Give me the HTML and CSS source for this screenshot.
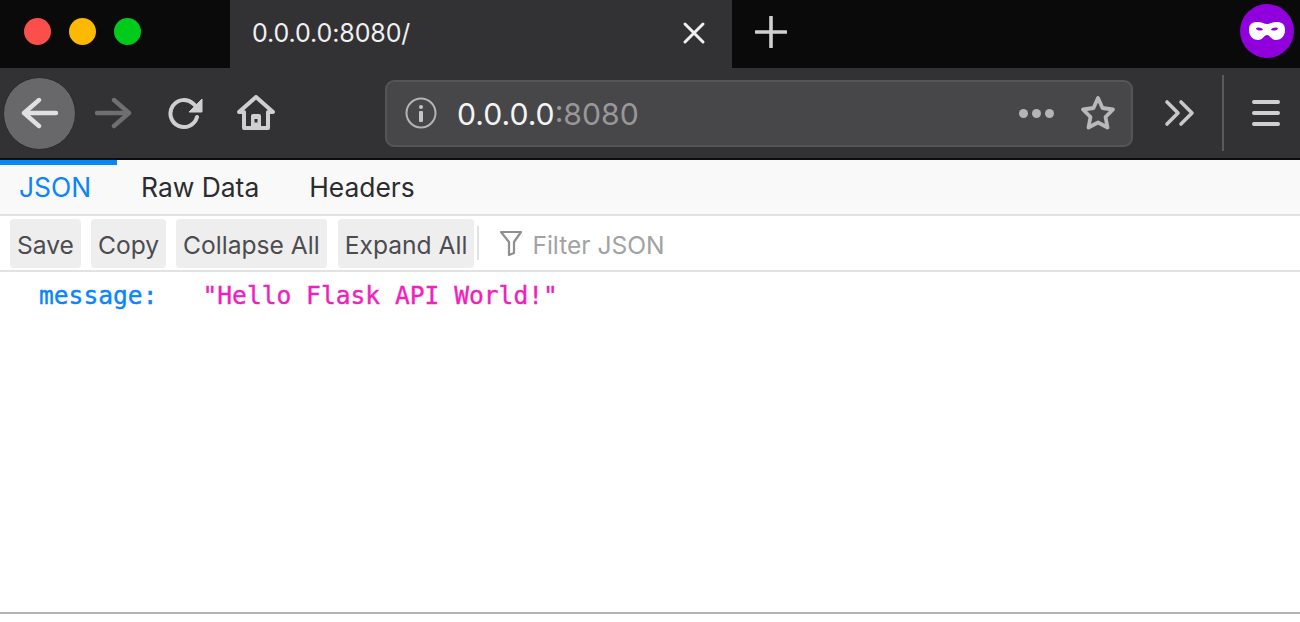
FILE: index.html
```html
<!DOCTYPE html>
<html lang="en">
<head>
<meta charset="utf-8">
<title>0.0.0.0:8080/</title>
<link rel="stylesheet" href="styles.css">
</head>
<body>
<div class="tabbar">
  <div class="dots"><span class="dot red"></span><span class="dot yellow"></span><span class="dot green"></span></div>
  <div class="tab">
    <span class="tab-title">0.0.0.0:8080/</span>
    <svg class="tab-close" width="24" height="24" viewBox="0 0 24 24"><path d="M3 3 L21 21 M21 3 L3 21" stroke="#f0f0f0" stroke-width="3" stroke-linecap="round"/></svg>
  </div>
  <svg class="new-tab" width="32" height="32" viewBox="0 0 32 32"><path d="M16 1 V31 M1 16 H31" stroke="#d0d0d0" stroke-width="3.600" stroke-linecap="round"/></svg>
  <div class="mask">
    <svg width="36" height="20" viewBox="0 0 36 20"><path fill-rule="evenodd" fill="#fff" d="M9 1 C13 1 15 3 18 3 C21 3 23 1 27 1 C32 1 36 2 36 9 C36 16 31 19 27 19 C22 19 21 14 18 14 C15 14 14 19 9 19 C5 19 0 16 0 9 C0 2 4 1 9 1 Z M7 7.500 C7 9.500 13 10.500 14 8.500 C13 6.500 8 5.500 7 7.500 Z M29 7.500 C29 9.500 23 10.500 22 8.500 C23 6.500 28 5.500 29 7.500 Z"/></svg>
  </div>
</div>
<div class="navbar">
  <div class="back">
    <svg width="38" height="32" viewBox="0 0 38 32"><path d="M18 3 L3 16 L18 29 M3 16 H35" fill="none" stroke="#e0e0e0" stroke-width="4.400" stroke-linecap="round" stroke-linejoin="round"/></svg>
  </div>
  <svg class="forward" width="38" height="32" viewBox="0 0 38 32"><path d="M20 3 L35 16 L20 29 M35 16 H3" fill="none" stroke="#6f6f71" stroke-width="4.400" stroke-linecap="round" stroke-linejoin="round"/></svg>
  <svg class="reload" width="36" height="34" viewBox="0 0 36 34"><path d="M29 21 A13.500 13.500 0 1 1 25 7.500 L30 12" fill="none" stroke="#cfcfcf" stroke-width="4" stroke-linecap="round"/><path d="M34 3 V16 H21 Z" fill="#cfcfcf" stroke="#cfcfcf" stroke-linejoin="round"/></svg>
  <svg class="home" width="38" height="36" viewBox="0 0 38 36"><path d="M2 17 L19 2 L36 17 L31 17 V33 H7 V17 Z" fill="none" stroke="#cfcfcf" stroke-width="4" stroke-linejoin="round"/><path d="M14 33 V21 Q14 19 16 19 H22 Q24 19 24 21 V33 Z" fill="#cfcfcf"/><rect x="17.500" y="24" width="3" height="3.500" fill="#323234"/></svg>
  <div class="urlbar">
    <svg class="info" width="32" height="32" viewBox="0 0 32 32"><circle cx="16" cy="16" r="14.500" fill="none" stroke="#b4b4b6" stroke-width="2"/><circle cx="16" cy="10" r="2" fill="#c4c4c6"/><rect x="14" y="14" width="4" height="11" rx="1" fill="#c4c4c6"/></svg>
    <span class="url"><span class="host">0.0.0.0</span><span class="port">:8080</span></span>
    <span class="more"><i></i><i></i><i></i></span>
    <svg class="star" width="36" height="36" viewBox="0 0 36 36"><path d="M18 3 L22.500 13 L33 14.500 L25.500 22 L27.500 32.500 L18 27.500 L8.500 32.500 L10.500 22 L3 14.500 L13.500 13 Z" fill="none" stroke="#b8b8ba" stroke-width="3.800" stroke-linejoin="round"/></svg>
  </div>
  <svg class="chev" width="32" height="28" viewBox="0 0 32 28"><path d="M3 3 L14 14 L3 25 M17 3 L28 14 L17 25" fill="none" stroke="#c8c8ca" stroke-width="3.600" stroke-linecap="round" stroke-linejoin="round"/></svg>
  <span class="sep"></span>
  <span class="burger"><i></i><i></i><i></i></span>
</div>
<div class="viewer">
  <div class="progress"></div>
  <div class="tabs">
    <span class="vtab active">JSON</span>
    <span class="vtab">Raw Data</span>
    <span class="vtab">Headers</span>
  </div>
  <div class="tools">
    <span class="btn">Save</span>
    <span class="btn">Copy</span>
    <span class="btn">Collapse All</span>
    <span class="btn">Expand All</span>
    <span class="tool-sep"></span>
    <svg class="funnel" width="24" height="26" viewBox="0 0 24 26"><path d="M2 2 H22 L15 12 V23 L10 25 V12 Z" fill="none" stroke="#8f8f91" stroke-width="2.200" stroke-linejoin="round"/></svg>
    <span class="filter">Filter JSON</span>
  </div>
  <div class="json"><span class="key">message:</span><span class="val">"Hello Flask API World!"</span></div>
</div>
<div class="bottom"></div>
</body>
</html>
```
FILE: styles.css
```css
* { box-sizing: border-box; }
html, body { margin: 0; padding: 0; height: 622px; overflow: hidden; background: #fff; }
body { font-family: Inter, "Liberation Sans", sans-serif; display: flex; flex-direction: column; }

.tabbar { height: 68px; flex: none; background: #0a0a0a; display: flex; align-items: center; }
.dots { width: 230px; flex: none; display: flex; gap: 18px; padding: 0 0 5px 24px; }
.dot { width: 27px; height: 27px; border-radius: 50%; }
.red { background: #fc4f4c; }
.yellow { background: #fdb900; }
.green { background: #00cb1a; }
.tab { width: 502px; height: 68px; flex: none; background: #323234; display: flex; align-items: center; padding: 0 26px 2px 22px; }
.tab-title { flex: 1; color: #f0f0f0; font-size: 25px; letter-spacing: -0.1px; }
.tab-close { display: block; }
.new-tab { margin: 0 0 5px 23px; display: block; flex: none; }
.mask { margin: 0 6px 6px auto; width: 54px; height: 54px; border-radius: 50%; background: #9000dc; display: flex; align-items: center; justify-content: center; }

.navbar { height: 92px; flex: none; background: #323234; border-bottom: 2px solid #0c0c0e; display: flex; align-items: center; padding-left: 3px; }
.back { width: 73px; height: 73px; flex: none; border-radius: 50%; background: #68686a; border: 1px solid #2a2a2c; display: flex; align-items: center; justify-content: center; }
.forward { margin-left: 18px; flex: none; }
.reload { margin-left: 36px; flex: none; }
.home { margin-left: 33px; flex: none; }
.urlbar { margin-left: 110px; width: 748px; height: 67px; flex: none; background: #474749; border: 2px solid #555557; border-radius: 9px; display: flex; align-items: center; padding-left: 18px; }
.info { flex: none; }
.url { margin-left: 20px; padding-top: 2px; font-size: 30.2px; }
.host { color: #f4f4f4; }
.port { color: #98989a; }
.more { margin-left: auto; display: flex; gap: 4px; }
.more i { width: 9px; height: 9px; border-radius: 50%; background: #b4b4b6; }
.star { margin: 0 15px 0 26px; flex: none; }
.chev { margin-left: 31px; flex: none; }
.sep { width: 2px; height: 76px; margin-left: 26px; background: #5a5a5c; flex: none; }
.burger { margin-left: 28px; width: 28px; display: flex; flex-direction: column; gap: 7px; }
.burger i { height: 4px; border-radius: 2px; background: #d0d0d2; }

.viewer { flex: 1; display: flex; flex-direction: column; min-height: 0; }
.progress { width: 117px; height: 5px; flex: none; background: #0a84ff; margin-bottom: -5px; position: relative; }
.tabs { height: 56px; flex: none; background: #f9f9fa; border-bottom: 2px solid #e2e2e4; display: flex; align-items: center; padding: 0 0 1px 19px; gap: 50px; font-size: 26.4px; color: #2c2c2e; }
.vtab.active { color: #0a84ff; }
.tools { height: 56px; flex: none; background: #fff; border-bottom: 2px solid #e2e2e4; display: flex; align-items: center; padding-left: 10px; }
.btn { height: 49px; padding: 3px 7px 0; background: #eeeeef; border-radius: 4px; font-size: 24.6px; color: #4c4c4f; display: flex; align-items: center; margin-right: 11px; white-space: nowrap; }
.btn:nth-child(-n+2) { margin-right: 10px; }
.btn:nth-child(4) { margin-right: 3px; }
.tool-sep { width: 2px; height: 34px; background: #e2e2e4; }
.funnel { margin-left: 20px; flex: none; }
.filter { margin-left: 9px; padding-top: 3px; font-size: 24.6px; color: #a2a2a5; }
.json { flex: 1; padding: 9px 0 0 39px; font-family: "DejaVu Sans Mono", "Liberation Mono", monospace; font-size: 24.6px; line-height: 30px; white-space: pre; -webkit-text-stroke: 0.4px; }
.key { color: #0a84ff; }
.val { margin-left: 45px; color: #f01fbd; }
.bottom { height: 10px; flex: none; border-top: 2px solid #b4b4b4; background: #fff; }
```
